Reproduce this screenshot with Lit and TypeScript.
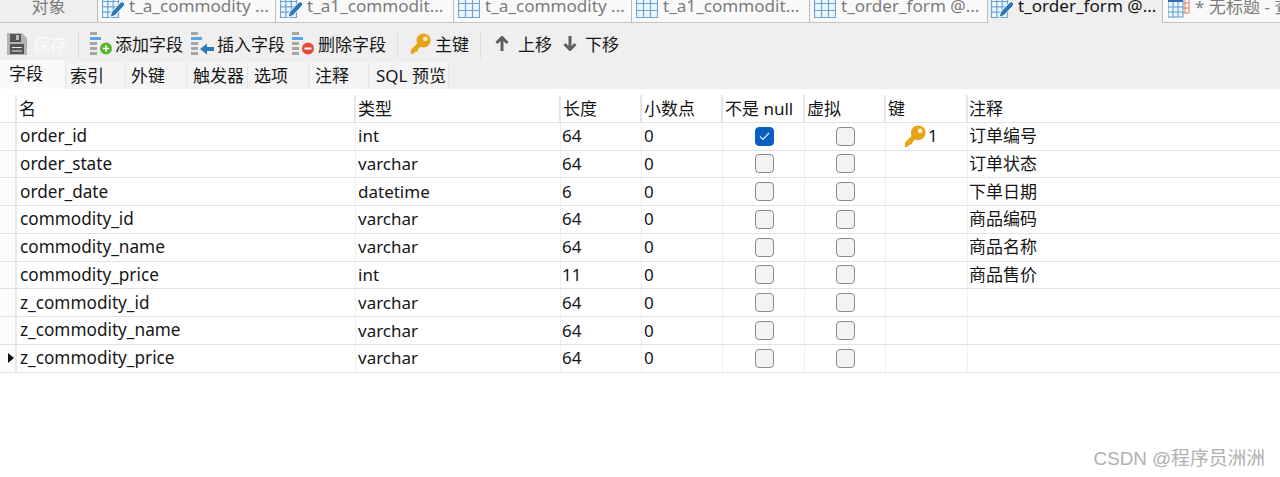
import { LitElement, html, css, svg } from "lit";
import { customElement } from "lit/decorators.js";

const grid = (x: number, s: number, n: number) => {
  const c = s / n;
  const lines = [];
  for (let i = 0; i <= n; i++) {
    lines.push(svg`<path d="M${x + i * c + 0.5} 3V24.500M${x} ${24 - i * c + 0.5}H${x + s + 1}" stroke="#6aa5d8" stroke-width="1.200"/>`);
  }
  return svg`<rect x=${x} y="3" width=${s} height="21" fill="#eef5fb"/>${lines}`;
};

const tableIcon = html`<svg class="ti" width="22" height="25" viewBox="0 0 22 25">${grid(0, 21, 3)}</svg>`;
const editIcon = html`<svg class="ti" width="22" height="25" viewBox="0 0 22 25">${grid(0, 16, 3)}
  <path d="M8 24.500l1.500-5.500 9-9.500q2-1.500 3.500 0t0 3.500l-9 9.500z" fill="#2f78b8" stroke="#fff" stroke-width="1"/></svg>`;
const queryIcon = html`<svg class="ti" width="22" height="25" viewBox="0 0 22 25">
  <path d="M12 5h9v15h-9z" fill="#fff" stroke="#e8735f"/><path d="M12 10h9M12 15h9M17 5v15" stroke="#e8735f"/>
  <rect x="0" y="5" width="15" height="19" fill="#eef5fb" stroke="#5b9bd5"/>
  <path d="M5 9v15M10 9v15M0 14h15M0 19h15" stroke="#5b9bd5"/>
  <rect x="0" y="3" width="15" height="6" fill="#2f6fa8"/></svg>`;

const keyIcon = (s: number) => html`<svg width=${s} height=${s} viewBox="0 0 24 24">
  <circle cx="15.500" cy="8.500" r="8" fill="#e8a317"/>
  <path d="M11 13L3 21" stroke="#e8a317" stroke-width="5.500"/>
  <path d="M1 19.500h3v4.500H1zM6 16h3v5H6z" fill="#e8a317"/>
  <circle cx="17.500" cy="6.500" r="2.600" fill="#fdf0c8"/></svg>`;

const bars = svg`<rect y="0" width="7" height="3" fill="#a6a6a6"/>
  <rect y="5" width="11" height="3" fill="#58a6e6"/>
  <rect y="10" width="7" height="3" fill="#a6a6a6"/>
  <rect y="15" width="7" height="3" fill="#a6a6a6"/>
  <rect y="20" width="7" height="3" fill="#a6a6a6"/>`;

const addIcon = html`<svg width="24" height="24" viewBox="0 0 24 24">${bars}
  <circle cx="16" cy="16.500" r="6" fill="#57b52c"/><path d="M12.800 16.500h6.400M16 13.300v6.400" stroke="#fff" stroke-width="1.500"/></svg>`;
const insIcon = html`<svg width="24" height="24" viewBox="0 0 24 24">${bars}
  <path d="M9 17l7-5.500v3.500h7v4h-7v3.500z" fill="#2f78b8"/></svg>`;
const delIcon = html`<svg width="24" height="24" viewBox="0 0 24 24">${bars}
  <circle cx="16" cy="16.500" r="6" fill="#e5493a"/><path d="M12.500 16.500h7" stroke="#fff" stroke-width="2"/></svg>`;
const diskIcon = html`<svg width="20" height="22" viewBox="0 0 20 22">
  <path d="M0 0h15l5 5v17H0z" fill="#b4b4b4"/><rect x="3" y="1" width="11" height="8" fill="#555"/>
  <rect x="9" y="2" width="3" height="5" fill="#bdbdbd"/>
  <rect x="3" y="11" width="14" height="10" fill="#555"/><path d="M5 14.500h10M5 18h10" stroke="#e8e8e8" stroke-width="1.200"/></svg>`;
const upIcon = html`<svg width="14" height="15" viewBox="0 0 14 15"><path d="M7 1v14M1.500 7L7 1.500 12.500 7" fill="none" stroke="#5f5f5f" stroke-width="3"/></svg>`;
const downIcon = html`<svg width="14" height="15" viewBox="0 0 14 15"><path d="M7 14V0M1.500 8L7 13.500 12.500 8" fill="none" stroke="#5f5f5f" stroke-width="3"/></svg>`;

const TABS = [
  { t: "t_a_commodity ...", i: editIcon },
  { t: "t_a1_commodit...", i: editIcon },
  { t: "t_a_commodity ...", i: tableIcon },
  { t: "t_a1_commodit...", i: tableIcon },
  { t: "t_order_form @...", i: tableIcon },
  { t: "t_order_form @...", i: editIcon, active: true },
  { t: "* 无标题 - 查询", i: queryIcon },
];

const TOOLS = [
  { w: 66, icon: diskIcon, label: "保存", off: true, gap: 6, pad: 7 },
  { sep: true, w: 24 },
  { w: 100, icon: addIcon, label: "添加字段", gap: 1, pad: 0 },
  { w: 100, icon: insIcon, label: "插入字段", gap: 2, pad: 1 },
  { w: 96, icon: delIcon, label: "删除字段", gap: 2, pad: 2 },
  { sep: true, w: 22 },
  { w: 61, icon: keyIcon(21), label: "主键", gap: 4, pad: 2 },
  { sep: true, w: 22 },
  { w: 61, icon: upIcon, label: "上移", gap: 9, pad: 4 },
  { w: 70, icon: downIcon, label: "下移", gap: 8, pad: 11 },
];

const SUB: [string, number, number][] = [["字段", 66, 9], ["索引", 60, 4], ["外键", 61, 5], ["触发器", 61, 6], ["选项", 61, 6], ["注释", 60, 6], ["SQL 预览", 80, 7]];
const HEAD = ["名", "类型", "长度", "小数点", "不是 null", "虚拟", "键", "注释"];
const ROWS: [string, string, string, string][] = [
  ["order_id", "int", "64", "订单编号"],
  ["order_state", "varchar", "64", "订单状态"],
  ["order_date", "datetime", "6", "下单日期"],
  ["commodity_id", "varchar", "64", "商品编码"],
  ["commodity_name", "varchar", "64", "商品名称"],
  ["commodity_price", "int", "11", "商品售价"],
  ["z_commodity_id", "varchar", "64", ""],
  ["z_commodity_name", "varchar", "64", ""],
  ["z_commodity_price", "varchar", "64", ""],
];

@customElement("app-root")
export class AppRoot extends LitElement {
  static styles = css`
    :host {
      display: block; width: 1280px; height: 477px; position: relative; overflow: hidden; background: #fff;
      font-family: "Noto Sans", "Noto Sans CJK SC", sans-serif; font-size: 17px; color: #161616;
    }
    .tabs { display: flex; height: 23px; background: #f9f9f9; overflow: hidden; align-items: flex-end; }
    .tab { flex: none; width: 178px; height: 31px; box-sizing: border-box; display: flex; align-items: center; gap: 5px; padding: 0 0 4px 4px; color: #7c7c7c; font-size: 17.100px; border-left: 1px solid #bdbdbd; border-bottom: 1px solid #c4c4c4; white-space: nowrap; overflow: hidden; }
    .tab.first { width: 97px; justify-content: center; padding-left: 0; border-left: 0; background: #efefef; }
    .tab.active { background: #efefef; color: #161616; width: 176px; padding-left: 3px; border-right: 1px solid #bdbdbd; border-bottom: 0; padding-bottom: 5px; }
    .tab.after { border-left: 0; padding-left: 5px; width: 140px; }
    .ti { flex: none; }
    .toolbar { height: 37px; padding-top: 4px; box-sizing: border-box; background: #efefef; display: flex; align-items: center; }
    .tool { flex: none; display: flex; align-items: center; box-sizing: border-box; white-space: nowrap; }
    .tool svg { flex: none; }
    .off { color: #fbfbfb; }
    .sep { flex: none; display: flex; justify-content: center; margin-top: 3px; }
    .sep i { display: block; width: 1px; height: 26px; background: #dcdcdc; }
    .sub { height: 29px; background: #efefef; display: flex; box-sizing: border-box; }
    .st { flex: none; box-sizing: border-box; height: 27px; margin-top: 2px; background: #f4f4f4; border-right: 1px solid #e6e6e6; white-space: nowrap; line-height: 28px; }
    .st.on { background: #fafafa; height: 29px; margin-top: 0; line-height: 28px; }
    .table { display: grid; grid-template-columns: 17px 339px 205px 81px 81px 82px 81px 82px 1fr; grid-auto-rows: 27.780px; padding-top: 6px; }
    .c { box-sizing: border-box; border-bottom: 1px solid #e2e2e2; border-right: 1px solid #efefef; padding: 0 0 1px 2px; display: flex; align-items: center; white-space: nowrap; line-height: 1; }
    .c.name { padding-left: 3px; font-size: 17.200px; }
    .c.len { padding-left: 1px; }
    .c:nth-child(9n + 1) { padding: 0; border-right: 2px solid #e8e8e8; background: #fcfcfc; }
    .c:nth-child(9n) { border-right: 0; padding-left: 1px; }
    .h { border-right: 2px solid #e6e6e6; padding-bottom: 0; }
    .h.blank { background: #fff !important; }
    .center { justify-content: center; padding: 0; }
    .c.nn { padding-left: 2px; }
    .cb { width: 19px; height: 19px; box-sizing: border-box; border: 1.500px solid #8a8a8a; border-radius: 4px; background: #f3f3f3; }
    .cb.on { background: #0a5fc0; border-color: #0a5fc0; display: flex; align-items: center; justify-content: center; }
    .key { display: flex; align-items: center; gap: 2px; padding-left: 16px; }
    .mark { display: block; margin-left: 8px; width: 0; height: 0; border-left: 6px solid #111; border-top: 5px solid transparent; border-bottom: 5px solid transparent; }
    .wm { position: absolute; right: 15px; bottom: 7px; font-family: "Liberation Sans", "Noto Sans CJK SC", sans-serif; font-size: 18.800px; color: #b0b0b0; line-height: 22px; }
  `;

  render() {
    return html`
      <div class="tabs">
        <div class="tab first">对象</div>
        ${TABS.map((t, i) => html`<div class="tab ${t.active ? "active" : ""} ${i === 6 ? "after" : ""}">${t.i}<span>${t.t}</span></div>`)}
      </div>
      <div class="toolbar">
        ${TOOLS.map((t: any) => t.sep
          ? html`<div class="sep" style="width:${t.w}px"><i></i></div>`
          : html`<div class="tool ${t.off ? "off" : ""}" style="width:${t.w}px;gap:${t.gap}px;padding-left:${t.pad}px">${t.icon}<span>${t.label}</span></div>`)}
      </div>
      <div class="sub">${SUB.map(([s, w, p], i) => html`<div class="st ${i === 0 ? "on" : ""}" style="width:${w}px;padding-left:${p}px">${s}</div>`)}</div>
      <div class="table">
        <div class="c h blank"></div>
        ${HEAD.map((h) => html`<div class="c h">${h}</div>`)}
        ${ROWS.map((r, i) => html`
          <div class="c">${i === 8 ? html`<span class="mark"></span>` : ""}</div>
          <div class="c name">${r[0]}</div>
          <div class="c">${r[1]}</div>
          <div class="c len">${r[2]}</div>
          <div class="c">0</div>
          <div class="c center nn">${i === 0
            ? html`<span class="cb on"><svg width="11" height="9" viewBox="0 0 11 9"><path d="M1 4.500l3 3 6-6.500" fill="none" stroke="#dfeaf7" stroke-width="1.200"/></svg></span>`
            : html`<span class="cb"></span>`}</div>
          <div class="c center"><span class="cb"></span></div>
          <div class="c">${i === 0 ? html`<span class="key">${keyIcon(22)}<span>1</span></span>` : ""}</div>
          <div class="c">${r[3]}</div>`)}
      </div>
      <div class="wm">CSDN @程序员洲洲</div>
    `;
  }
}
